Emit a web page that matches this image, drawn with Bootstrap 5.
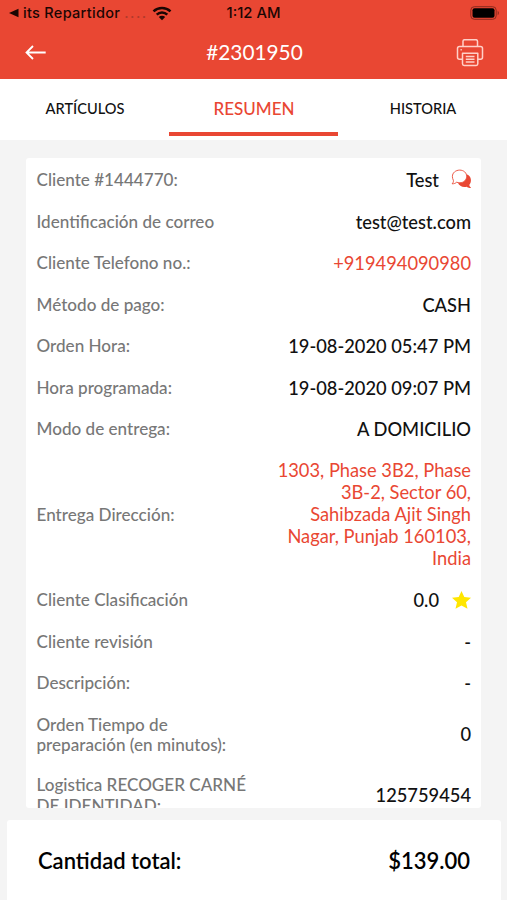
<!DOCTYPE html>
<html lang="es">
<head>
<meta charset="utf-8">
<meta name="viewport" content="width=device-width, initial-scale=1">
<title>Pedido #2301950</title>
<link href="https://cdn.jsdelivr.net/npm/bootstrap@5.3.0/dist/css/bootstrap.min.css" rel="stylesheet">
<style>
  :root { --brand: #e94733; }
  body { font-family: Lato, "Liberation Sans", sans-serif; background: #f4f4f4; color: #111; }
  .app { height: 900px; }
  .top-area { background: var(--brand); height: 79px; }
  .status { height: 26px; font: 500 14.5px/26px Inter, "Liberation Sans", sans-serif; color: #1a0603; padding: 0 7px 0 9px; }
  .status > div { flex: 1 1 0; }
  .app-name { letter-spacing: .3px; }
  .clock { font-size: 14.8px; margin-right: 2px; }
  .dots { color: #b13a2b; letter-spacing: 1.5px; }
  .titlebar { height: 53px; padding: 0 23px 0 25px; }
  .titlebar .side { width: 30px; }
  .order-no { font-size: 20.8px; line-height: 51px; height: 53px; }
  .tabs { height: 61px; }
  .tabs .nav-link { height: 57px; color: #111; font-size: 14.6px; line-height: 60px; padding: 0 0 0 1px; border-radius: 0; font-weight: 500; }
  .tabs .nav-link.active { color: var(--brand); font-size: 17px; border-bottom: 4px solid var(--brand); }
  .details { margin: 18px 26px 0; height: 650px; padding: 1.5px 10px 0 10.5px; border-radius: 3px; }
  .line { padding: 9.75px 0; }
  .label { width: 220px; font-size: 17.1px; line-height: 20.5px; color: #777; font-weight: 500; }
  .label.two-line { padding-top: 1px; margin-bottom: -1px; }
  .value { width: 205px; font-size: 18.3px; line-height: 22px; font-weight: 500; }
  .accent { color: var(--brand); font-weight: 400; }
  .address { margin: -.5px 0 .5px; }
  .chat { margin: -2px -1px 0 12px; }
  .star { margin-left: 13px; }
  .total { margin: 12px 6px 0 7px; padding: 0 31px; height: 80px; font-size: 22px; font-weight: 600; color: #000; border-radius: 3px 3px 0 0; }
  svg { display: block; }
</style>
</head>
<body>
<div class="app d-flex flex-column overflow-hidden">
  <header class="top-area flex-shrink-0">
    <div class="status d-flex align-items-center">
      <div class="d-flex align-items-center text-nowrap">
        <svg width="10" height="10" viewBox="0 0 10 10"><path d="M0 5 9.500 .8v8.400z" fill="#1a0603"/></svg>
        <span class="ms-1 app-name">its Repartidor</span>
        <span class="dots ms-1">....</span>
        <svg width="20" height="15" viewBox="0 0 20 15"  class="ms-1"><g fill="none" stroke="#1a0603" stroke-width="2.500"><path d="M1.500 5.300a12.300 12.300 0 0 1 17 0"/><path d="M4.700 8.700a7.600 7.600 0 0 1 10.600 0"/></g><path d="M10 14.300 6.800 11a4.600 4.600 0 0 1 6.400 0z" fill="#1a0603"/></svg>
      </div>
      <span class="clock">1:12 AM</span>
      <div class="d-flex justify-content-end">
        <svg width="30" height="14" viewBox="0 0 30 14"><rect x=".8" y=".7" width="25.400" height="12.600" rx="3.500" fill="none" stroke="#8c2a1e"/><rect x="2.500" y="2.300" width="22" height="9.400" rx="2" fill="#000"/><path d="M27.700 4.800c1.600.8 1.600 3.600 0 4.400z" fill="#8c2a1e"/></svg>
      </div>
    </div>
    <div class="titlebar d-flex align-items-center justify-content-between text-white">
      <div class="side"><svg width="22" height="16" viewBox="0 0 22 16" fill="none" stroke="#fff" stroke-width="1.800"><path d="M20.700 7.500H1.500M8 1 1.500 7.500 8 14"/></svg></div>
      <div class="order-no">#2301950</div>
      <div class="side d-flex justify-content-end">
        <svg width="28" height="28" viewBox="0 0 28 28" fill="none" stroke="#ffd0c8" stroke-width="1.500" stroke-linejoin="round"><path d="M7 7V2.300c0-1 .6-1.600 1.600-1.600h11.300c1 0 1.600.6 1.600 1.600V7M6 20.200H3.500c-1.300 0-2-.7-2-2V9.500c0-1.300.7-2 2-2h21c1.300 0 2 .7 2 2v8.700c0 1.300-.7 2-2 2H22"/><path d="M6.500 14.300h15.300v10.500c0 1-.6 1.600-1.600 1.600H8.100c-1 0-1.600-.6-1.600-1.600zM9.800 17.500h8.700M9.800 20.200h8.700M9.800 22.900h8.700M4.500 10.800h1.300"/></svg>
      </div>
    </div>
  </header>
  <nav class="tabs nav nav-justified bg-white flex-shrink-0 align-items-start">
    <a class="nav-link nav-item" href="#">ARTÍCULOS</a>
    <a class="nav-link nav-item active" href="#">RESUMEN</a>
    <a class="nav-link nav-item" href="#">HISTORIA</a>
  </nav>
  <main class="details bg-white overflow-hidden flex-shrink-0">
    <div class="line d-flex justify-content-between align-items-center"><div class="label">Cliente #1444770:</div>
      <div class="value d-flex justify-content-end align-items-center">Test
        <svg class="chat" width="21" height="20" viewBox="0 0 21 20"><path d="M16.500 5.500c3.800 2 4.500 7.200 1.900 10.300-.1 1.400.6 2.200 1.700 2.900-1.800.5-3.400 0-4.600-1-3.800.8-7.500-.6-8.600-4.200z" fill="#e94733"/><path d="M8.700 1.100c4 0 7 2.700 7 6.300s-3 6.400-7 6.400c-1.100 0-2.100-.2-3-.6-1.200 1.100-2.700 1.700-4.600 1.600 1-1 1.500-2 1.300-3.400-.6-1.200-1-2.500-1-4C1.400 3.800 4.700 1.100 8.700 1.100z" fill="#fff" stroke="#e94733" stroke-width=".9"/></svg>
      </div></div>
    <div class="line d-flex justify-content-between align-items-center"><div class="label">Identificación de correo</div><div class="value text-end">test@test.com</div></div>
    <div class="line d-flex justify-content-between align-items-center"><div class="label">Cliente Telefono no.:</div><div class="value text-end accent">+919494090980</div></div>
    <div class="line d-flex justify-content-between align-items-center"><div class="label">Método de pago:</div><div class="value text-end">CASH</div></div>
    <div class="line d-flex justify-content-between align-items-center"><div class="label">Orden Hora:</div><div class="value text-end">19-08-2020 05:47 PM</div></div>
    <div class="line d-flex justify-content-between align-items-center"><div class="label">Hora programada:</div><div class="value text-end">19-08-2020 09:07 PM</div></div>
    <div class="line d-flex justify-content-between align-items-center"><div class="label">Modo de entrega:</div><div class="value text-end">A DOMICILIO</div></div>
    <div class="line d-flex justify-content-between align-items-center"><div class="label">Entrega Dirección:</div><div class="value text-end accent address">1303, Phase 3B2, Phase<br>3B-2, Sector 60,<br>Sahibzada Ajit Singh<br>Nagar, Punjab 160103,<br>India</div></div>
    <div class="line d-flex justify-content-between align-items-center"><div class="label">Cliente Clasificación</div>
      <div class="value d-flex justify-content-end align-items-center">0.0
        <svg class="star" width="19" height="18" viewBox="0 0 19 18"><path d="m9.500 0 2.800 6.100 6.700.7-5 4.400 1.500 6.600-6-3.400-6 3.400L5 11.200 0 6.800l6.700-.7z" fill="#ffe600"/></svg>
      </div></div>
    <div class="line d-flex justify-content-between align-items-center"><div class="label">Cliente revisión</div><div class="value text-end">-</div></div>
    <div class="line d-flex justify-content-between align-items-center"><div class="label">Descripción:</div><div class="value text-end">-</div></div>
    <div class="line d-flex justify-content-between align-items-center"><div class="label two-line">Orden Tiempo de<br>preparación (en minutos):</div><div class="value text-end">0</div></div>
    <div class="line d-flex justify-content-between align-items-center"><div class="label two-line">Logistica RECOGER CARNÉ<br>DE IDENTIDAD:</div><div class="value text-end">125759454</div></div>
  </main>
  <footer class="total bg-white d-flex justify-content-between align-items-center flex-shrink-0"><span>Cantidad total:</span><span>$139.00</span></footer>
</div>
<script src="https://cdn.jsdelivr.net/npm/bootstrap@5.3.0/dist/js/bootstrap.bundle.min.js"></script>
</body>
</html>
